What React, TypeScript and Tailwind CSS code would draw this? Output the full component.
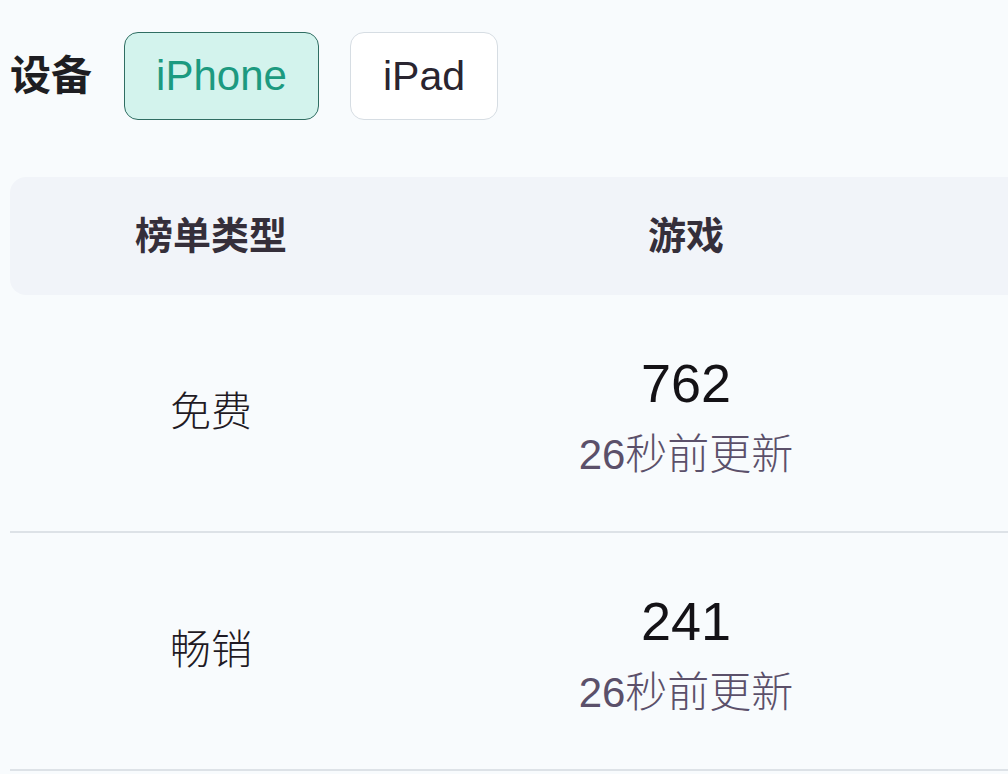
import React from "react";

const font = { fontFamily: '"Liberation Sans", "Noto Sans CJK SC", sans-serif' };

const rows = [
  { type: "免费", count: "762", updated: "26秒前更新" },
  { type: "畅销", count: "241", updated: "26秒前更新" },
];

export default function App() {
  return (
    <div className="w-[1008px] h-[774px] overflow-hidden bg-[#f8fbfd] text-[#222]" style={font}>
      {/* device switch */}
      <div className="flex items-center h-[154px] pl-[10px] pb-[2px]">
        <span className="text-[41px] font-bold text-[#1e1e22] mr-[32px] leading-none">设备</span>
        <button className="w-[195px] h-[88px] rounded-[14px] border-[1.5px] border-[#2f6d62] bg-[#d3f3ed] text-[#1c9a80] text-[42px] leading-none mr-[31px]">
          iPhone
        </button>
        <button className="w-[148px] h-[88px] rounded-[14px] border border-[#d6dde3] bg-white text-[#2a2530] text-[41px] leading-none">
          iPad
        </button>
      </div>

      {/* table */}
      <div className="ml-[10px] mt-[23px]">
        <div className="flex items-center h-[118px] rounded-l-[16px] bg-[#f1f4f9] text-[38px] font-bold text-[#352f3a]">
          <div className="w-[402px] text-center">榜单类型</div>
          <div className="w-[548px] text-center">游戏</div>
        </div>
        {rows.map((r, i) => (
          <div key={i} className="flex items-center h-[238px] border-b-2 border-[#dde2e7]">
            <div className="w-[402px] text-center text-[41px] text-[#1f1a24] font-light">{r.type}</div>
            <div className="w-[548px] flex flex-col items-center pt-[6px]">
              <div className="text-[54px] leading-none text-[#141216] mb-[24px]">{r.count}</div>
              <div className="text-[42px] leading-none text-[#5b506a] font-light">{r.updated}</div>
            </div>
          </div>
        ))}
      </div>
    </div>
  );
}
